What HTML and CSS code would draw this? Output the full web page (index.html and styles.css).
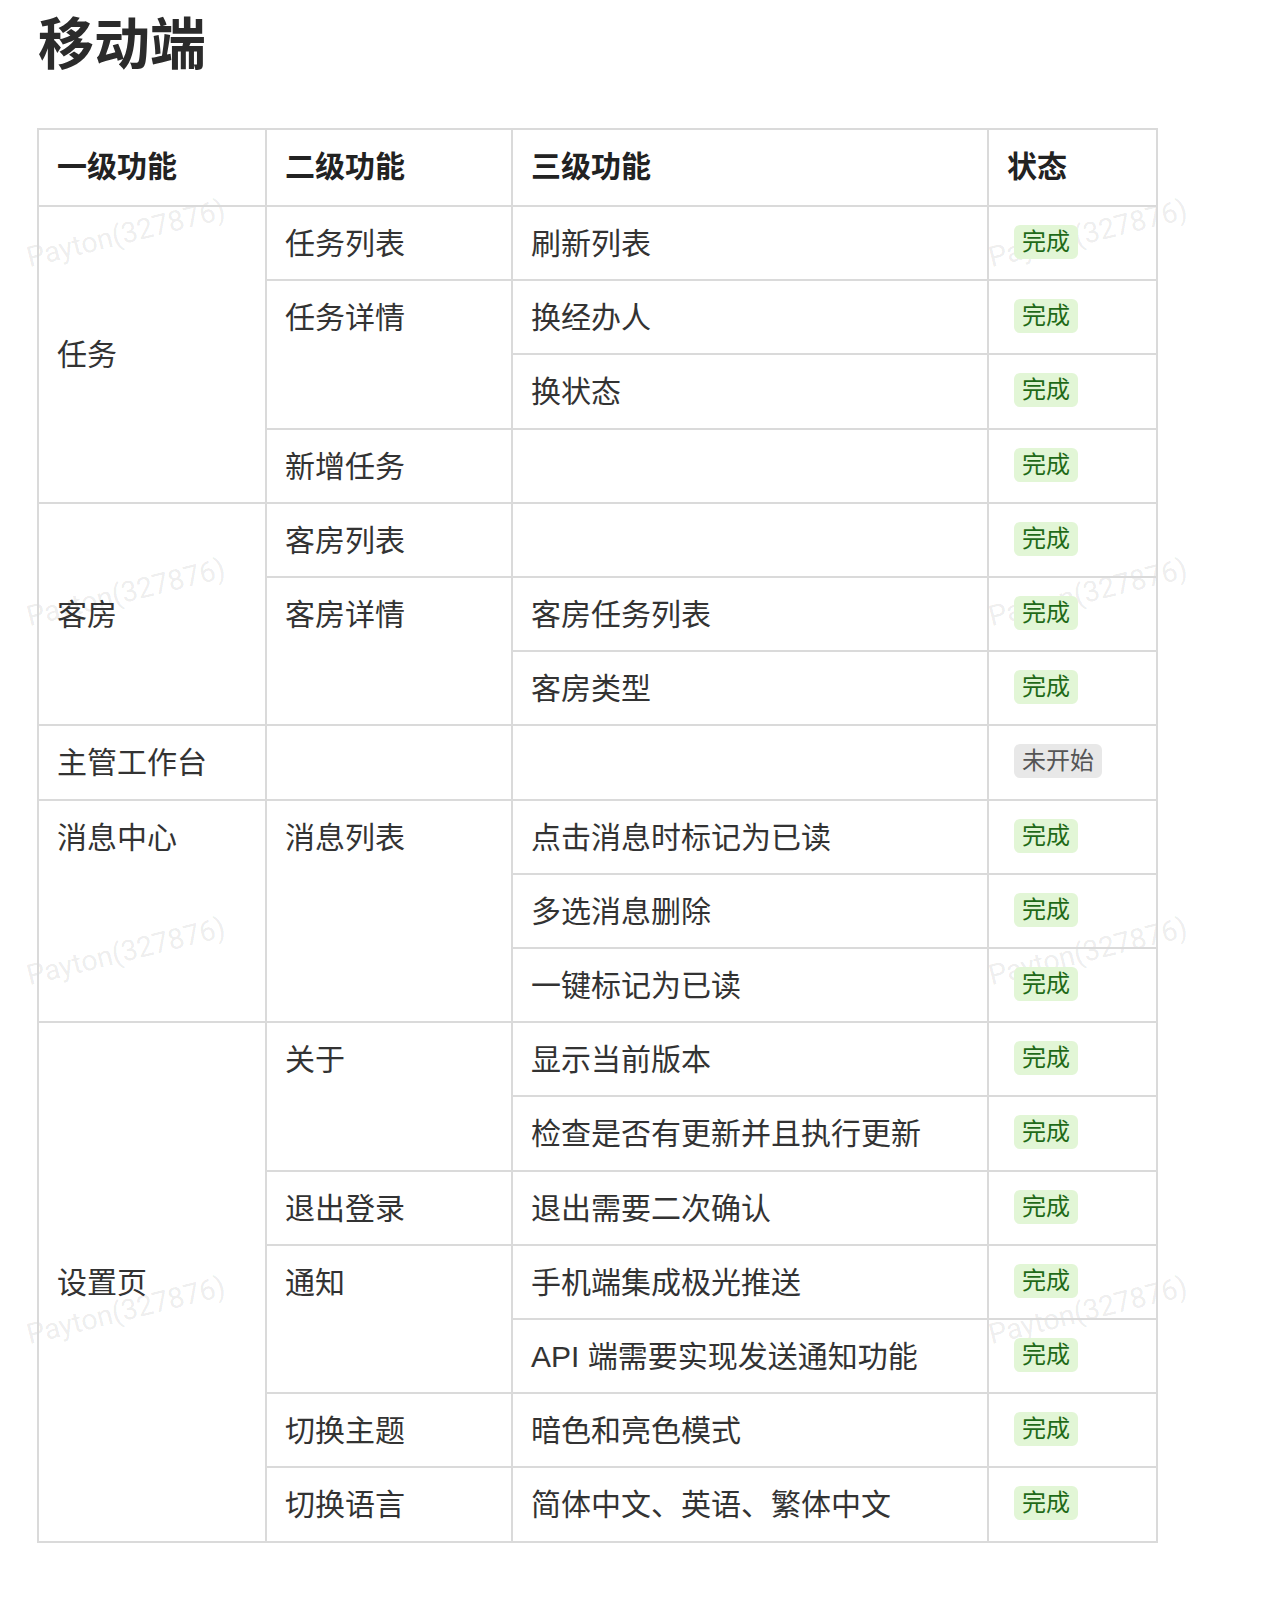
FILE: index.html
```html
<!DOCTYPE html>
<html lang="zh-CN">
<head>
<meta charset="utf-8">
<title>移动端</title>
<link rel="stylesheet" href="styles.css">
</head>
<body>
<div class="page">
  <div class="watermarks" aria-hidden="true">
    <span class="wm wm-l1">Payton(327876)</span>
    <span class="wm wm-r1">Payton(327876)</span>
    <span class="wm wm-l2">Payton(327876)</span>
    <span class="wm wm-r2">Payton(327876)</span>
    <span class="wm wm-l3">Payton(327876)</span>
    <span class="wm wm-r3">Payton(327876)</span>
    <span class="wm wm-l4">Payton(327876)</span>
    <span class="wm wm-r4">Payton(327876)</span>
  </div>
  <h1 class="title">移动端</h1>
  <table class="features">
    <colgroup>
      <col class="c1"><col class="c2"><col class="c3"><col class="c4">
    </colgroup>
    <thead>
      <tr><th>一级功能</th><th>二级功能</th><th>三级功能</th><th>状态</th></tr>
    </thead>
    <tbody>
      <tr><td rowspan="4" class="mid">任务</td><td>任务列表</td><td>刷新列表</td><td><span class="badge done">完成</span></td></tr>
      <tr><td rowspan="2">任务详情</td><td>换经办人</td><td><span class="badge done">完成</span></td></tr>
      <tr><td>换状态</td><td><span class="badge done">完成</span></td></tr>
      <tr><td>新增任务</td><td></td><td><span class="badge done">完成</span></td></tr>

      <tr><td rowspan="3" class="mid">客房</td><td>客房列表</td><td></td><td><span class="badge done">完成</span></td></tr>
      <tr><td rowspan="2">客房详情</td><td>客房任务列表</td><td><span class="badge done">完成</span></td></tr>
      <tr><td>客房类型</td><td><span class="badge done">完成</span></td></tr>

      <tr><td>主管工作台</td><td></td><td></td><td><span class="badge todo">未开始</span></td></tr>

      <tr><td rowspan="3">消息中心</td><td rowspan="3">消息列表</td><td>点击消息时标记为已读</td><td><span class="badge done">完成</span></td></tr>
      <tr><td>多选消息删除</td><td><span class="badge done">完成</span></td></tr>
      <tr><td>一键标记为已读</td><td><span class="badge done">完成</span></td></tr>

      <tr><td rowspan="7" class="mid">设置页</td><td rowspan="2">关于</td><td>显示当前版本</td><td><span class="badge done">完成</span></td></tr>
      <tr><td>检查是否有更新并且执行更新</td><td><span class="badge done">完成</span></td></tr>
      <tr><td>退出登录</td><td>退出需要二次确认</td><td><span class="badge done">完成</span></td></tr>
      <tr><td rowspan="2">通知</td><td>手机端集成极光推送</td><td><span class="badge done">完成</span></td></tr>
      <tr><td>API 端需要实现发送通知功能</td><td><span class="badge done">完成</span></td></tr>
      <tr><td>切换主题</td><td>暗色和亮色模式</td><td><span class="badge done">完成</span></td></tr>
      <tr><td>切换语言</td><td>简体中文、英语、繁体中文</td><td><span class="badge done">完成</span></td></tr>
    </tbody>
  </table>
</div>
</body>
</html>
```
FILE: styles.css
```css
html, body {
  margin: 0;
  padding: 0;
  background: #fff;
}

body {
  font-family: "Liberation Sans", "Noto Sans CJK SC", sans-serif;
  color: #333;
}

.page {
  position: relative;
  padding: 12px 37px 60px 37px;
}

.title {
  position: relative;
  z-index: 1;
  margin: 0 0 0 1px;
  font-size: 56px;
  line-height: 66px;
  font-weight: 700;
  color: #2b2b2b;
}

.features {
  position: relative;
  z-index: 1;
  margin-top: 50px;
  border-collapse: collapse;
  table-layout: fixed;
  width: 1119px;
  font-size: 30px;
  background: transparent;
}

.c1 { width: 228px; }
.c2 { width: 246px; }
.c3 { width: 476px; }
.c4 { width: 169px; }

.features th,
.features td {
  border: 2px solid #dadada;
  padding: 19px 18px 17px 18px;
  line-height: 36.2px;
  text-align: left;
  vertical-align: top;
}

.features th {
  padding-top: 19px;
  padding-bottom: 20px;
  line-height: 36px;
  font-weight: 700;
  color: #222;
}

.features td.mid {
  vertical-align: middle;
}

.badge {
  display: inline-block;
  vertical-align: top;
  margin: -1px 0 0 7px;
  padding: 0 8px;
  height: 34px;
  line-height: 34px;
  font-size: 24px;
  border-radius: 6px;
}

.badge.done {
  background: #e2f6d6;
  color: #1f6a18;
}

.badge.todo {
  background: #e8e8e8;
  color: #555;
}

.watermarks {
  position: absolute;
  left: 0;
  top: 0;
  width: 100%;
  height: 100%;
  z-index: 0;
  overflow: hidden;
  pointer-events: none;
}

.wm {
  position: absolute;
  transform: translate(-50%, -50%) rotate(-14deg);
  font-family: Roboto, "Liberation Sans", sans-serif;
  font-size: 28.5px;
  line-height: 32px;
  color: rgba(0, 0, 0, 0.085);
  white-space: nowrap;
}

.wm-l1 { left: 126px; top: 234px; }
.wm-r1 { left: 1088px; top: 234px; }
.wm-l2 { left: 126px; top: 593px; }
.wm-r2 { left: 1088px; top: 593px; }
.wm-l3 { left: 126px; top: 952px; }
.wm-r3 { left: 1088px; top: 952px; }
.wm-l4 { left: 126px; top: 1311px; }
.wm-r4 { left: 1088px; top: 1311px; }
```
